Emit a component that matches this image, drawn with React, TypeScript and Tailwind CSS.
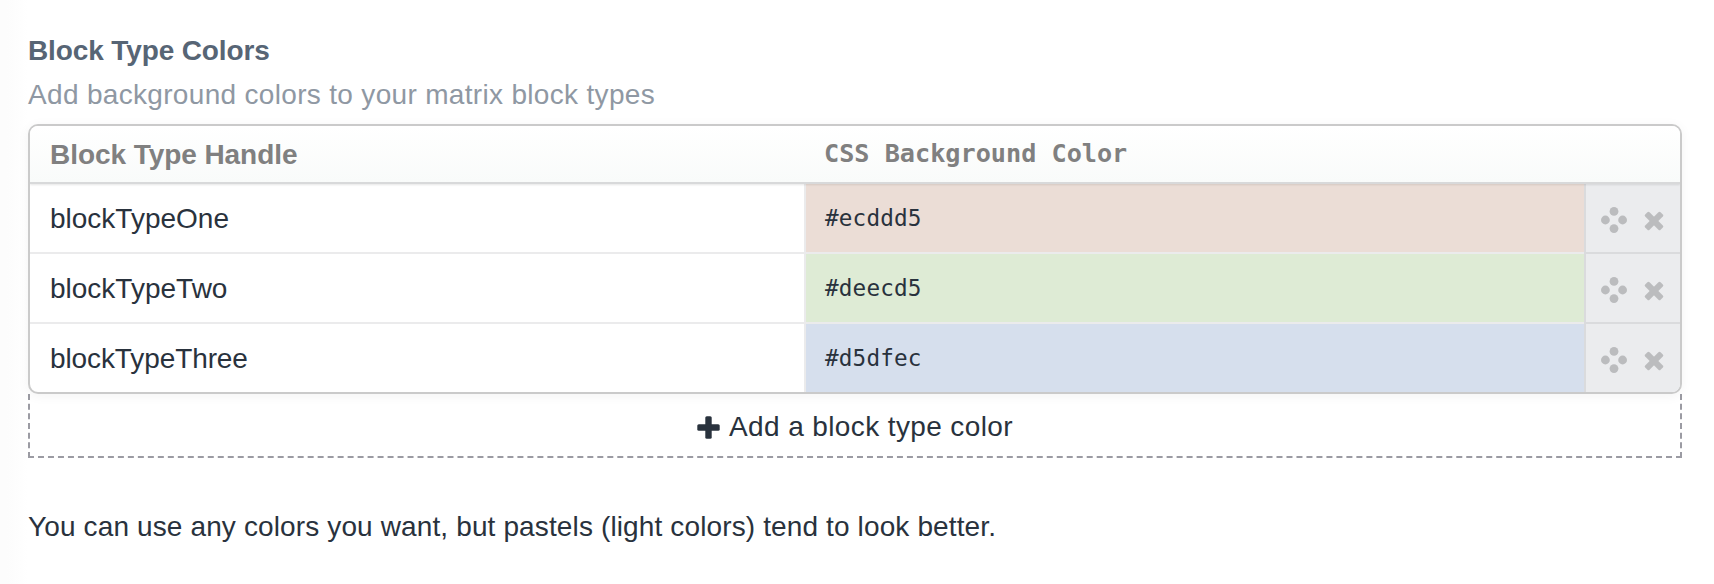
const rows = [
  { handle: "blockTypeOne", color: "#ecddd5", fill: "bg-[#ebddd6]", spacing: "tracking-[0px]" },
  { handle: "blockTypeTwo", color: "#deecd5", fill: "bg-[#deebd5]", spacing: "tracking-[0px]" },
  { handle: "blockTypeThree", color: "#d5dfec", fill: "bg-[#d6dfed]", spacing: "tracking-[-0.1px]" },
];

function MoveIcon() {
  return (
    <svg className="h-[26px] w-[26px]" viewBox="0 0 26 26" fill="#bbbcbe" aria-hidden="true">
      <circle cx="13" cy="4.4" r="4.4" />
      <circle cx="4.4" cy="13" r="4.4" />
      <circle cx="21.6" cy="13" r="4.4" />
      <circle cx="13" cy="21.6" r="4.4" />
    </svg>
  );
}

function DeleteIcon() {
  return (
    <svg className="mt-px h-5 w-5" viewBox="0 0 20 20" fill="#bbbcbe" aria-hidden="true">
      <g transform="rotate(45 10 10)">
        <rect x="-0.9" y="6.9" width="21.8" height="6.2" rx="1.5" />
        <rect x="6.9" y="-0.9" width="6.2" height="21.8" rx="1.5" />
      </g>
    </svg>
  );
}

function PlusIcon() {
  return (
    <svg className="h-[23px] w-[23px]" viewBox="0 0 23 23" fill="#29323d" aria-hidden="true">
      <rect x="0.3" y="8.3" width="22.4" height="6.4" rx="1.5" />
      <rect x="8.3" y="0.3" width="6.4" height="22.4" rx="1.5" />
    </svg>
  );
}

export default function App() {
  return (
    <div className="flex h-[584px] w-[1714px] bg-white font-['Liberation_Sans',sans-serif] text-[28px] leading-10 text-[#29323d]">
      <div className="w-7 shrink-0 bg-linear-to-r from-[#fcfcfc] from-25% to-white" />
      <main className="w-[1654px] pt-[31px]">
        <h2 className="font-bold tracking-[-0.12px] whitespace-nowrap text-[#576575]">Block Type Colors</h2>
        <p className="mt-1 tracking-[0.32px] whitespace-nowrap text-[#8f98a3]">
          Add background colors to your matrix block types
        </p>

        <div className="relative mt-[9px] overflow-hidden rounded-[10px] border-2 border-[#cacaca] bg-white shadow-[0_2px_12px_rgba(0,0,0,0.05)]">
          <div className="relative flex h-[58px] items-center border-b-2 border-[#d8d9da] bg-linear-to-b from-white to-[#f9fbfa] font-bold text-[#808080] shadow-[0_1px_2px_rgba(0,0,0,0.1)]">
            <div className="w-[776px] pt-0.5 pl-5 tracking-[-0.06px]">Block Type Handle</div>
            <div className="pl-[18px] font-['DejaVu_Sans_Mono',monospace] text-[25.2px]">
              CSS Background Color
            </div>
          </div>
          {rows.map((row, i) => (
            <div key={row.handle} className={i < 2 ? "flex h-[70px]" : "flex h-[68px]"}>
              <div
                className={`flex w-[776px] items-center border-r-2 border-[#ebebec] pt-0.5 pl-5 ${row.spacing} ${i < 2 ? "border-b-2" : ""}`}
              >
                {row.handle}
              </div>
              <div
                className={`flex w-[778px] items-center border-[#ebebec] pl-[19px] font-['DejaVu_Sans_Mono',monospace] text-[22.68px] tracking-[0.15px] ${row.fill} ${i < 2 ? "border-b-2" : ""}`}
              >
                {row.color}
              </div>
              <div
                className={`flex w-24 items-center gap-[17px] border-l-2 border-[#dadbdd] bg-[#ebecee] pt-1 pl-[15px] ${i < 2 ? "border-b-2" : ""}`}
              >
                <MoveIcon />
                <DeleteIcon />
              </div>
            </div>
          ))}
        </div>

        <button className="flex h-16 w-full items-center justify-center gap-[9px] border-2 border-t-0 border-dashed border-[#9b9ba3] pt-1 tracking-[0.38px] whitespace-nowrap">
          <PlusIcon />
          Add a block type color
        </button>

        <p className="mt-[49px] tracking-[0.13px] whitespace-nowrap">
          You can use any colors you want, but pastels (light colors) tend to look better.
        </p>
      </main>
    </div>
  );
}
